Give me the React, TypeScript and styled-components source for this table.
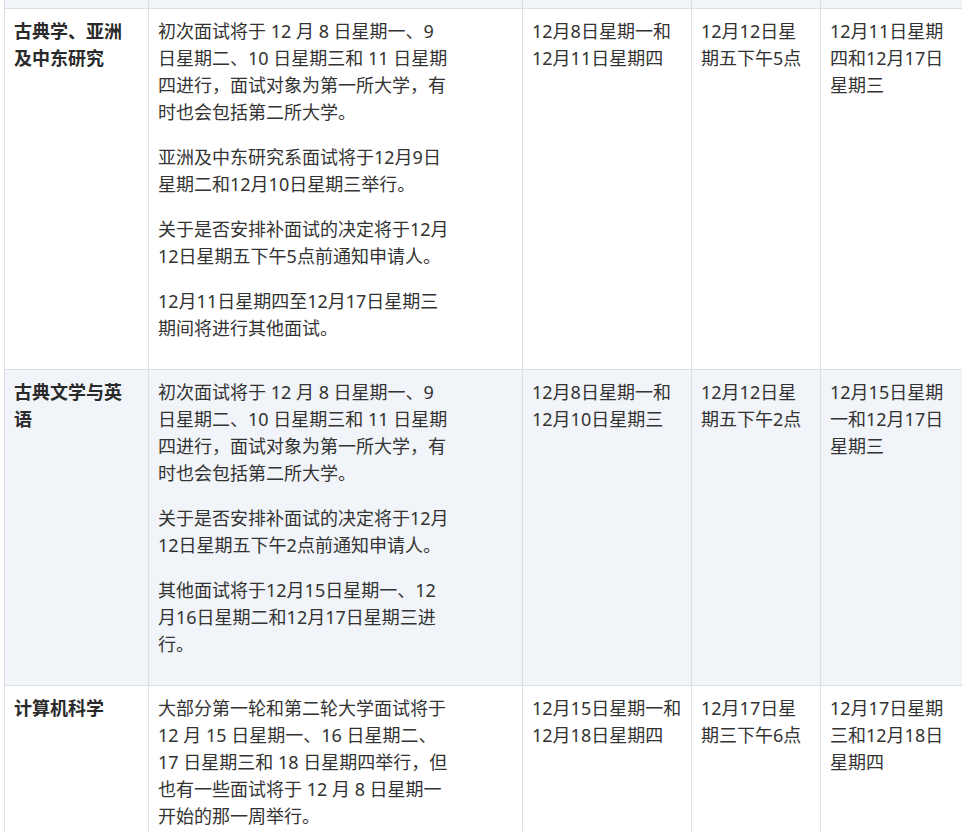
import React from 'react';
import styled, { createGlobalStyle } from 'styled-components';

const GlobalStyle = createGlobalStyle`
    html, body {
        margin: 0;
        padding: 0;
        background: #ffffff;
        overflow: hidden;
    }
    body {
        font-family: "Noto Sans", "Noto Sans CJK SC", sans-serif;
        color: #333333;
    }
`;

const Page = styled.div`
    padding-left: 4px;
    width: 1000px;
`;

const Table = styled.table`
    border-collapse: collapse;
    table-layout: fixed;
    width: 960px;
    font-size: 18px;
    line-height: 27px;
`;

const Row = styled.tr<{ $striped?: boolean }>`
    background: ${(p) => (p.$striped ? '#f1f4f8' : '#ffffff')};
`;

const CutRow = styled.tr`
    background: #f1f4f8;
    height: 8px;

    td {
        padding: 0;
        height: 7px;
    }
`;

const Cell = styled.td`
    border: 1px solid #dcdfe4;
    border-top: 0;
    padding: 9px 9px;
    vertical-align: top;
`;

const Subject = styled(Cell)`
    font-weight: 700;
    color: #2a2a2a;
`;

const Para = styled.p`
    margin: 0 0 18px;
    max-width: 292px;
`;

interface IRow {
    subject: string;
    notes: string[];
    interviews: string;
    decision: string;
    others: string;
}

const rows: IRow[] = [
    {
        subject: '古典学、亚洲及中东研究',
        notes: [
            '初次面试将于 12 月 8 日星期一、9 日星期二、10 日星期三和 11 日星期四进行，面试对象为第一所大学，有时也会包括第二所大学。',
            '亚洲及中东研究系面试将于12月9日星期二和12月10日星期三举行。',
            '关于是否安排补面试的决定将于12月12日星期五下午5点前通知申请人。',
            '12月11日星期四至12月17日星期三期间将进行其他面试。',
        ],
        interviews: '12月8日星期一和12月11日星期四',
        decision: '12月12日星期五下午5点',
        others: '12月11日星期四和12月17日星期三',
    },
    {
        subject: '古典文学与英语',
        notes: [
            '初次面试将于 12 月 8 日星期一、9 日星期二、10 日星期三和 11 日星期四进行，面试对象为第一所大学，有时也会包括第二所大学。',
            '关于是否安排补面试的决定将于12月12日星期五下午2点前通知申请人。',
            '其他面试将于12月15日星期一、12月16日星期二和12月17日星期三进行。',
        ],
        interviews: '12月8日星期一和12月10日星期三',
        decision: '12月12日星期五下午2点',
        others: '12月15日星期一和12月17日星期三',
    },
    {
        subject: '计算机科学',
        notes: [
            '大部分第一轮和第二轮大学面试将于 12 月 15 日星期一、16 日星期二、17 日星期三和 18 日星期四举行，但也有一些面试将于 12 月 8 日星期一开始的那一周举行。',
        ],
        interviews: '12月15日星期一和12月18日星期四',
        decision: '12月17日星期三下午6点',
        others: '12月17日星期三和12月18日星期四',
    },
];

const App: React.FC = () => {
    return (
        <Page>
            <GlobalStyle />
            <Table>
                <colgroup>
                    <col style={{ width: 144 }} />
                    <col style={{ width: 374 }} />
                    <col style={{ width: 169 }} />
                    <col style={{ width: 129 }} />
                    <col style={{ width: 144 }} />
                </colgroup>
                <tbody>
                    <CutRow>
                        <Cell />
                        <Cell />
                        <Cell />
                        <Cell />
                        <Cell />
                    </CutRow>
                    {rows.map((row, i) => (
                        <Row key={row.subject} $striped={i % 2 === 1}>
                            <Subject>{row.subject}</Subject>
                            <Cell>
                                {row.notes.map((note) => (
                                    <Para key={note}>{note}</Para>
                                ))}
                            </Cell>
                            <Cell>{row.interviews}</Cell>
                            <Cell>{row.decision}</Cell>
                            <Cell>{row.others}</Cell>
                        </Row>
                    ))}
                </tbody>
            </Table>
        </Page>
    );
};

export default App;
